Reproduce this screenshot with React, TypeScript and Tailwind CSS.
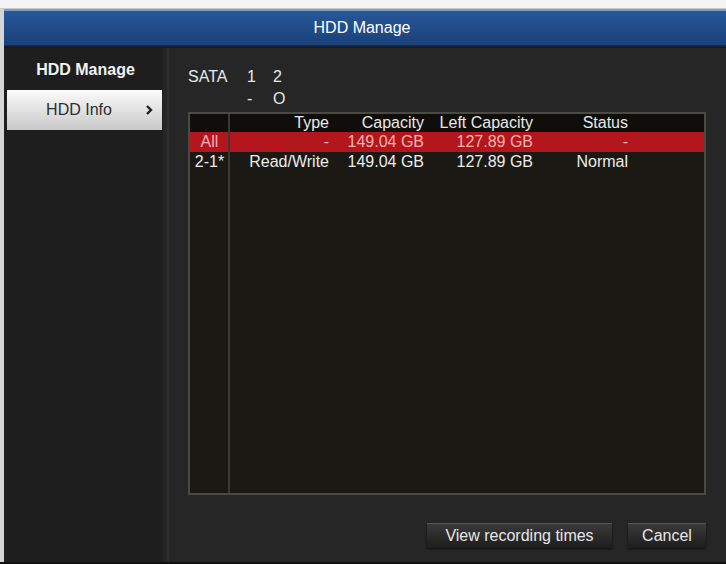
import React from "react";

const rows = [
  { id: "All", type: "-", cap: "149.04 GB", left: "127.89 GB", status: "-", active: true },
  { id: "2-1*", type: "Read/Write", cap: "149.04 GB", left: "127.89 GB", status: "Normal", active: false },
];

const cols = "grid grid-cols-[39px_100px_95px_109px_95px_1fr]";

const App = () => {
  return (
    <div
      className="w-[726px] h-[564px] bg-[#eeeeee] flex flex-col overflow-hidden text-[16px] leading-[18px]"
      style={{ fontFamily: '"Liberation Sans", Arial, sans-serif' }}
    >
      {/* top strip */}
      <div className="h-[9px] bg-[#f4f4f4] border-b border-[#c9c9c9]" />

      <div className="flex flex-1">
        <div className="w-[4px] bg-[#d6d6d6]" />

        <div className="flex-1 flex flex-col">
          {/* title bar */}
          <div className="h-[39px] flex flex-col">
            <div className="h-[2px] bg-[#7f9cc4]" />
            <div className="flex-1 bg-gradient-to-b from-[#275899] to-[#1a417a] flex items-center justify-center text-white pr-[6px]">
              HDD Manage
            </div>
            <div className="h-[3px] bg-gradient-to-b from-[#163057] to-[#141414]" />
          </div>

          <div className="flex flex-1 bg-[#262626]">
            {/* sidebar */}
            <aside className="w-[159px] bg-[#1e1e1e] flex flex-col pt-[13px]">
              <div className="text-center font-bold text-[#f2f2f2] pl-[4px]">HDD Manage</div>
              <div className="mt-[11px] ml-[3px] w-[155px] h-[40px] bg-gradient-to-b from-[#fbfbfb] to-[#c9c9c9] flex items-center text-[#2e2e2e]">
                <span className="flex-1 text-center pl-[6px]">HDD Info</span>
                <svg width="8" height="10" viewBox="0 0 8 10" className="mr-[9px]">
                  <polyline points="2,1 6,5 2,9" fill="none" stroke="#222" strokeWidth="2.4" />
                </svg>
              </div>
            </aside>

            {/* separator */}
            <div className="w-[9px] bg-[#252525] flex justify-center">
              <div className="w-[2px] bg-[#2f2f2f]" />
            </div>

            {/* main */}
            <main className="flex-1 flex flex-col pl-[16px] pr-[20px] pt-[18px] pb-[14px] text-[#e8e8e8]">
              <div className="grid grid-cols-[59px_26px_20px] leading-[22px]">
                <span>SATA</span>
                <span>1</span>
                <span>2</span>
                <span />
                <span>-</span>
                <span>O</span>
              </div>

              <div className="mt-[2px] h-[383px] border-2 border-[#4b4a40] bg-[#1b1914] relative">
                <div className="absolute top-0 bottom-0 left-[38px] w-[2px] bg-[#3a3932]" />
                <div className={`${cols} h-[18px] bg-[#0f0e0b] items-end text-right`}>
                  <span />
                  <span>Type</span>
                  <span>Capacity</span>
                  <span>Left Capacity</span>
                  <span>Status</span>
                  <span />
                </div>
                {rows.map((r) => (
                  <div
                    key={r.id}
                    className={`${cols} h-[20px] items-center text-right ${
                      r.active ? "bg-[#b3161c] text-[#ffb3b0]" : "text-[#ececec]"
                    }`}
                  >
                    <span className="text-center">{r.id}</span>
                    <span>{r.type}</span>
                    <span>{r.cap}</span>
                    <span>{r.left}</span>
                    <span>{r.status}</span>
                    <span />
                  </div>
                ))}
              </div>

              <div className="mt-[28px] flex justify-end gap-[16px]">
                <button className="h-[25px] w-[185px] bg-gradient-to-b from-[#3a3a3a] to-[#1d1d1d] border-t border-[#555] text-[#e6e6e6] shadow-[0_1px_2px_rgba(0,0,0,0.6)]">
                  View recording times
                </button>
                <button className="h-[25px] w-[78px] bg-gradient-to-b from-[#3a3a3a] to-[#1d1d1d] border-t border-[#555] text-[#e6e6e6] shadow-[0_1px_2px_rgba(0,0,0,0.6)]">
                  Cancel
                </button>
              </div>
            </main>
          </div>
        </div>
      </div>

      <div className="h-[2px] bg-[#111]" />
    </div>
  );
};

export default App;
